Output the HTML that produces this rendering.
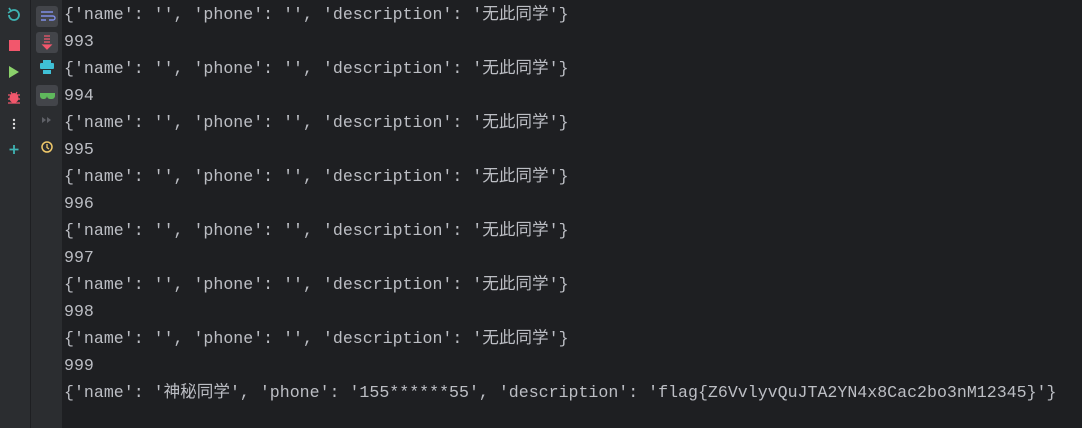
<!DOCTYPE html><html><head><meta charset="utf-8"><style>
body{margin:0;width:1082px;height:428px;background:#1e1f22;overflow:hidden;position:relative;font-family:"Liberation Mono","Noto Sans CJK SC",monospace;}
.s1{position:absolute;left:0;top:0;width:30px;height:428px;background:#2b2d30;}
.s2{position:absolute;left:31px;top:0;width:31px;height:428px;background:#2b2d30;}
.sep{position:absolute;left:30px;top:0;width:1px;height:428px;background:#1e1f22;}
.txt{position:absolute;left:64px;top:1px;color:#bcbec4;font-size:16.6px;line-height:27px;white-space:pre;}
.txt div{height:27px}
.ic{position:absolute}
</style></head><body>
<div class="s1"></div><div class="sep"></div><div class="s2"></div>
<svg class="ic" style="left:0;top:0" width="62" height="160">
<path d="M9 15 A5 5 0 1 0 11 11" stroke="#3fb3b3" stroke-width="1.8" fill="none"/><path d="M9 8 L11 11 L8 13" stroke="#3fb3b3" stroke-width="1.6" fill="none"/>
<rect x="9" y="40" width="11" height="11" fill="#f2576c"/>
<path d="M9 66 L19 72 L9 78Z" fill="#8bd16b"/>
<ellipse cx="14" cy="98" rx="4.5" ry="5" fill="#f2576c"/><path d="M8 95h12M8 99h12M8 103h12M11 92l1 2M17 92l-1 2" stroke="#f2576c" stroke-width="1.2"/>
<circle cx="14" cy="120" r="1.2" fill="#ddd"/><circle cx="14" cy="124" r="1.2" fill="#ddd"/><circle cx="14" cy="128" r="1.2" fill="#ddd"/>
<path d="M14 145v9M9.5 149.5h9" stroke="#3fb3b3" stroke-width="1.8"/>
<rect x="36" y="6" width="22" height="21" rx="3" fill="#43454a"/>
<path d="M41 12h12M41 16h12a2 2 0 0 1 0 4h-4M41 20h5" stroke="#7f8ee6" stroke-width="1.4" fill="none"/>
<rect x="36" y="32" width="22" height="21" rx="3" fill="#43454a"/>
<path d="M44 36h6M44 39h6M44 42h6M43 45l4 4 4-4Z" stroke="#f2576c" stroke-width="1.2" fill="#f2576c"/>
<rect x="40" y="63" width="14" height="6" rx="1" fill="#3fc0d6"/><rect x="43" y="60" width="8" height="3" fill="#3fc0d6"/><rect x="43" y="70" width="8" height="4" fill="#3fc0d6"/>
<rect x="36" y="85" width="22" height="21" rx="3" fill="#43454a"/>
<path d="M40 93h15v3a3 3 0 0 1-3 3h-2a3 3 0 0 1-3-3a3 3 0 0 1-3 3h-1a3 3 0 0 1-3-3Z" fill="#5fb85c"/>
<path d="M42 117l4 3-4 3ZM47 117l4 3-4 3Z" fill="#5e6066"/>
<circle cx="47" cy="147" r="5" stroke="#f0c96a" stroke-width="1.5" fill="none"/><path d="M47 144v3.5l2 1.5" stroke="#f0c96a" stroke-width="1.3" fill="none"/>
</svg>
<div class="txt"><div>{'name': '', 'phone': '', 'description': '无此同学'}</div><div>993</div><div>{'name': '', 'phone': '', 'description': '无此同学'}</div><div>994</div><div>{'name': '', 'phone': '', 'description': '无此同学'}</div><div>995</div><div>{'name': '', 'phone': '', 'description': '无此同学'}</div><div>996</div><div>{'name': '', 'phone': '', 'description': '无此同学'}</div><div>997</div><div>{'name': '', 'phone': '', 'description': '无此同学'}</div><div>998</div><div>{'name': '', 'phone': '', 'description': '无此同学'}</div><div>999</div><div>{'name': '神秘同学', 'phone': '155******55', 'description': 'flag{Z6VvlyvQuJTA2YN4x8Cac2bo3nM12345}'}</div></div>
</body></html>
